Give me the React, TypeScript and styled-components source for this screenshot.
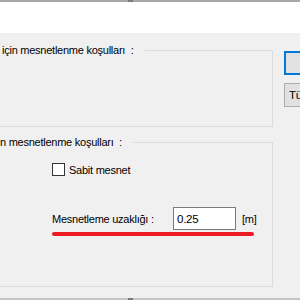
import React from 'react';
import styled, { createGlobalStyle } from 'styled-components';

const GlobalStyle = createGlobalStyle`
  html, body {
    margin: 0;
    padding: 0;
    background: #f0f0f0;
  }
  body {
    font-family: "Liberation Sans", Arial, sans-serif;
    font-size: 11px;
    letter-spacing: -0.25px;
    color: #000;
  }
`;

function App() {
  return (
    <Wrapper>
      <GlobalStyle />
      <Strip>
        <Notch />
      </Strip>
      <WhitePanel />
      <Body>
        <Groups>
          <GroupBox>
            <GroupHeader>
              <GroupTitle>için mesnetlenme koşulları&nbsp;&nbsp;:</GroupTitle>
              <GroupLine />
            </GroupHeader>
            <GroupContent height={69} />
          </GroupBox>

          <GroupBox>
            <GroupHeader>
              <GroupTitle offset={0}>n mesnetlenme koşulları&nbsp;&nbsp;:</GroupTitle>
              <GroupLine />
            </GroupHeader>
            <GroupContent height={137}>
              <CheckRow>
                <CheckBox />
                <span>Sabit mesnet</span>
              </CheckRow>
              <FieldRow>
                <FieldLabel>Mesnetleme uzaklığı :</FieldLabel>
                <TextInput defaultValue="0.25" />
                <Unit>[m]</Unit>
              </FieldRow>
              <RedLine />
            </GroupContent>
          </GroupBox>
        </Groups>

        <Buttons>
          <Button focused />
          <Button>Tüm</Button>
        </Buttons>
      </Body>
      <Spacer />
      <Strip light>
        <Notch />
      </Strip>
    </Wrapper>
  );
}

const Wrapper = styled.div`
  width: 300px;
  height: 300px;
  overflow: hidden;
  display: flex;
  flex-direction: column;
  background: #f0f0f0;
`;

const Strip = styled.div<{ light?: boolean }>`
  height: 2px;
  flex-shrink: 0;
  background: ${(p) => (p.light ? '#c4c4c4' : '#a8a8a8')};
  display: flex;
  padding-left: 128px;
`;

const Notch = styled.div`
  width: 5px;
  height: 100%;
  background: #7a7a7a;
`;

const WhitePanel = styled.div`
  height: 31px;
  flex-shrink: 0;
  background: #fff;
`;

const Body = styled.div`
  display: flex;
  padding-top: 10px;
  gap: 11px;
`;

const Groups = styled.div`
  width: 273px;
  display: flex;
  flex-direction: column;
  gap: 8px;
  flex-shrink: 0;
`;

const GroupBox = styled.div`
  display: flex;
  flex-direction: column;
`;

const GroupHeader = styled.div`
  height: 14px;
  display: flex;
  align-items: center;
`;

const GroupTitle = styled.span<{ offset?: number }>`
  padding-left: ${(p) => (p.offset ?? 2)}px;
  padding-right: 11px;
  white-space: nowrap;
  line-height: 14px;
`;

const GroupLine = styled.div`
  flex: 1;
  height: 1px;
  background: #dcdcdc;
  align-self: flex-start;
  margin-top: 7px;
  border-right: 1px solid #dcdcdc;
`;

const GroupContent = styled.div<{ height: number }>`
  height: ${(p) => p.height}px;
  border-right: 1px solid #dcdcdc;
  border-bottom: 1px solid #dcdcdc;
  margin-top: -7px;
  padding-top: 7px;
  box-sizing: content-box;
  display: flex;
  flex-direction: column;
  padding-left: 52px;
`;

const CheckRow = styled.label`
  display: flex;
  align-items: center;
  gap: 4px;
  margin-top: 14px;
  font-size: 11px;
`;

const CheckBox = styled.span`
  width: 11px;
  height: 11px;
  border: 1px solid #333;
  background: #fff;
  display: inline-block;
`;

const FieldRow = styled.div`
  display: flex;
  align-items: center;
  margin-top: 31px;
  height: 23px;
  font-size: 11px;
`;

const FieldLabel = styled.span`
  width: 121px;
  white-space: nowrap;
`;

const TextInput = styled.input`
  width: 55px;
  height: 17px;
  border: 1px solid #7a7a7a;
  padding: 2px 3px;
  font-family: inherit;
  font-size: 11.5px;
  letter-spacing: -0.25px;
  color: #000;
  background: #fff;
  outline: none;
  margin: 0;
`;

const Unit = styled.span`
  margin-left: 6px;
`;

const RedLine = styled.div`
  width: 202px;
  height: 4px;
  border-radius: 2px;
  background: #ed1c24;
  margin-top: 2px;
`;

const Buttons = styled.div`
  display: flex;
  flex-direction: column;
  gap: 8px;
  padding-top: 8px;
`;

const Button = styled.div<{ focused?: boolean }>`
  width: 75px;
  height: 24px;
  box-sizing: border-box;
  background: #e1e1e1;
  border: ${(p) => (p.focused ? '2px solid #0078d7' : '1px solid #adadad')};
  display: flex;
  align-items: center;
  padding-left: 4px;
  font-size: 11.5px;
  white-space: nowrap;
`;

const Spacer = styled.div`
  flex: 1;
`;

export default App;
